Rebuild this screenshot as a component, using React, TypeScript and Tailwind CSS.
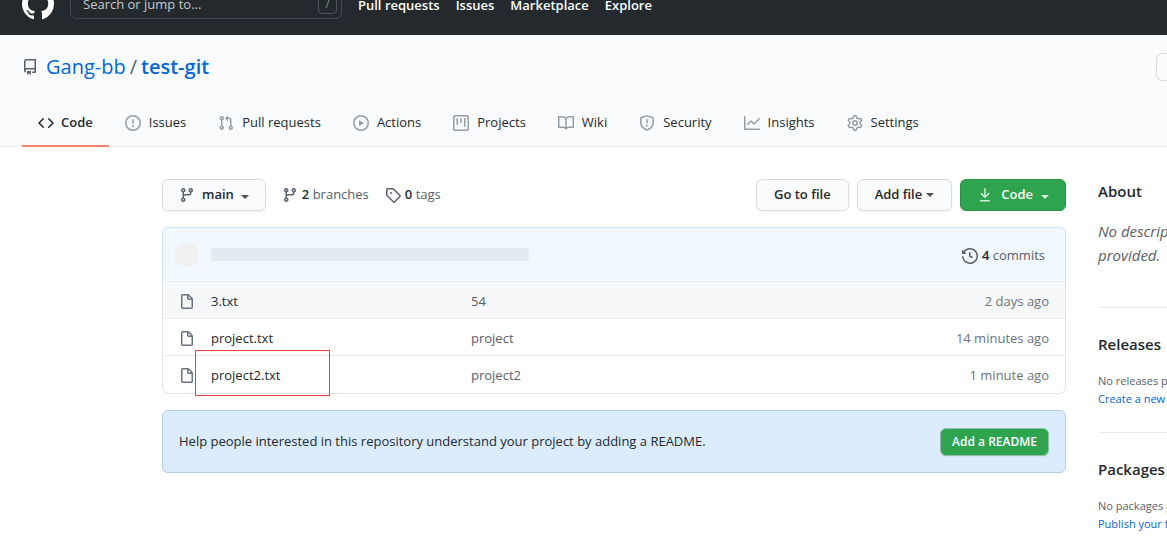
import clsx from 'clsx'
import React, { FC, ReactNode } from 'react'

const icons = {
  mark: 'M8 0C3.58 0 0 3.58 0 8c0 3.54 2.29 6.53 5.47 7.59.4.07.55-.17.55-.38 0-.19-.01-.82-.01-1.49-2.01.37-2.53-.49-2.69-.94-.09-.23-.48-.94-.82-1.13-.28-.15-.68-.52-.01-.53.63-.01 1.08.58 1.23.82.72 1.21 1.87.87 2.33.66.07-.52.28-.87.51-1.07-1.78-.2-3.64-.89-3.64-3.95 0-.87.31-1.59.82-2.15-.08-.2-.36-1.02.08-2.12 0 0 .67-.21 2.2.82.64-.18 1.32-.27 2-.27.68 0 1.36.09 2 .27 1.53-1.04 2.2-.82 2.2-.82.44 1.1.16 1.92.08 2.12.51.56.82 1.27.82 2.15 0 3.07-1.87 3.75-3.65 3.95.29.25.54.73.54 1.48 0 1.07-.01 1.93-.01 2.2 0 .21.15.46.55.38A8.013 8.013 0 0016 8c0-4.42-3.58-8-8-8z',
  repo: 'M2 2.5A2.5 2.5 0 014.5 0h8.75a.75.75 0 01.75.75v12.5a.75.75 0 01-.75.75h-2.5a.75.75 0 110-1.5h1.75v-2h-8a1 1 0 00-.714 1.7.75.75 0 01-1.072 1.05A2.495 2.495 0 012 11.5v-9zm10.5-1V9h-8c-.356 0-.694.074-1 .208V2.5a1 1 0 011-1h8zM5 12.25v3.25a.25.25 0 00.4.2l1.45-1.087a.25.25 0 01.3 0L8.6 15.7a.25.25 0 00.4-.2v-3.25a.25.25 0 00-.25-.25h-3.5a.25.25 0 00-.25.25z',
  code: 'M4.72 3.22a.75.75 0 011.06 1.06L2.06 8l3.72 3.72a.75.75 0 11-1.06 1.06L.47 8.53a.75.75 0 010-1.06l4.25-4.25zm6.56 0a.75.75 0 10-1.06 1.06L13.94 8l-3.72 3.72a.75.75 0 101.06 1.06l4.25-4.25a.75.75 0 000-1.06l-4.25-4.25z',
  issue: 'M8 1.5a6.5 6.5 0 100 13 6.5 6.5 0 000-13zM0 8a8 8 0 1116 0A8 8 0 010 8zm9 3a1 1 0 11-2 0 1 1 0 012 0zm-.25-6.25a.75.75 0 00-1.5 0v3.5a.75.75 0 001.5 0v-3.5z',
  pull: 'M7.177 3.073L9.573.677A.25.25 0 0110 .854v4.792a.25.25 0 01-.427.177L7.177 3.427a.25.25 0 010-.354zM3.75 2.5a.75.75 0 100 1.5.75.75 0 000-1.5zm-2.25.75a2.25 2.25 0 113 2.122v5.256a2.251 2.251 0 11-1.5 0V5.372A2.25 2.25 0 011.5 3.25zM11 2.5h-1V4h1a1 1 0 011 1v5.628a2.251 2.251 0 101.5 0V5A2.5 2.5 0 0011 2.5zm1 10.25a.75.75 0 111.5 0 .75.75 0 01-1.5 0zM3.75 12a.75.75 0 100 1.5.75.75 0 000-1.5z',
  play: 'M1.5 8a6.5 6.5 0 1113 0 6.5 6.5 0 01-13 0zM8 0a8 8 0 100 16A8 8 0 008 0zM6.379 5.227A.25.25 0 006 5.442v5.117a.25.25 0 00.379.214l4.264-2.559a.25.25 0 000-.428L6.379 5.227z',
  project:
    'M1.75 0A1.75 1.75 0 000 1.75v12.5C0 15.216.784 16 1.75 16h12.5A1.75 1.75 0 0016 14.25V1.75A1.75 1.75 0 0014.25 0H1.75zM1.5 1.75a.25.25 0 01.25-.25h12.5a.25.25 0 01.25.25v12.5a.25.25 0 01-.25.25H1.75a.25.25 0 01-.25-.25V1.75zM11.75 3a.75.75 0 00-.75.75v7.5a.75.75 0 001.5 0v-7.5a.75.75 0 00-.75-.75zm-8.25.75a.75.75 0 011.5 0v5.5a.75.75 0 01-1.5 0v-5.5zM8 3a.75.75 0 00-.75.75v3.5a.75.75 0 001.5 0v-3.5A.75.75 0 008 3z',
  book: 'M0 1.75A.75.75 0 01.75 1h4.253c1.227 0 2.317.59 3 1.501A3.744 3.744 0 0111.006 1h4.245a.75.75 0 01.75.75v10.5a.75.75 0 01-.75.75h-4.507a2.25 2.25 0 00-1.591.659l-.622.621a.75.75 0 01-1.06 0l-.622-.621A2.25 2.25 0 005.258 13H.75a.75.75 0 01-.75-.75V1.75zm8.755 3a2.25 2.25 0 012.25-2.25H14.5v9h-3.757c-.71 0-1.4.201-1.992.572l.004-7.322zm-1.504 7.324l.004-5.073-.002-2.253A2.25 2.25 0 005.003 2.5H1.5v9h3.757a3.75 3.75 0 011.994.574z',
  shield:
    'M7.467.133a1.75 1.75 0 011.066 0l5.25 1.68A1.75 1.75 0 0115 3.48V7c0 1.566-.32 3.182-1.303 4.682-.983 1.498-2.585 2.813-5.032 3.855a1.7 1.7 0 01-1.33 0c-2.447-1.042-4.049-2.357-5.032-3.855C1.32 10.182 1 8.566 1 7V3.48a1.75 1.75 0 011.217-1.667l5.25-1.68zm.61 1.429a.25.25 0 00-.153 0l-5.25 1.68a.25.25 0 00-.174.238V7c0 1.358.275 2.666 1.057 3.86.784 1.194 2.121 2.34 4.366 3.297a.2.2 0 00.154 0c2.245-.956 3.582-2.104 4.366-3.298C13.225 9.666 13.5 8.36 13.5 7V3.48a.25.25 0 00-.174-.237l-5.25-1.68zM9 10.5a1 1 0 11-2 0 1 1 0 012 0zm-.25-5.75a.75.75 0 10-1.5 0v3a.75.75 0 001.5 0v-3z',
  graph:
    'M1.5 1.75a.75.75 0 00-1.5 0v12.5c0 .414.336.75.75.75h14.5a.75.75 0 000-1.5H1.5V1.75zm14.28 2.53a.75.75 0 00-1.06-1.06L10 7.94 7.53 5.47a.75.75 0 00-1.06 0L3.22 8.72a.75.75 0 001.06 1.06L7 7.06l2.47 2.47a.75.75 0 001.06 0l5.25-5.25z',
  gear: 'M8 0a8.2 8.2 0 0 1 .701.031C9.444.095 9.99.645 10.16 1.29l.288 1.107c.018.066.079.158.212.224.231.114.454.243.668.386.123.082.233.09.299.071l1.103-.303c.644-.176 1.392.021 1.82.63.27.385.506.792.704 1.218.315.675.111 1.422-.364 1.891l-.814.806c-.049.048-.098.147-.088.294.016.257.016.515 0 .772-.01.147.038.246.088.294l.814.806c.475.469.679 1.216.364 1.891a7.977 7.977 0 0 1-.704 1.217c-.428.61-1.176.807-1.82.63l-1.102-.302c-.067-.019-.177-.011-.3.071a5.909 5.909 0 0 1-.668.386c-.133.066-.194.158-.211.224l-.29 1.106c-.168.646-.715 1.196-1.458 1.26a8.006 8.006 0 0 1-1.402 0c-.743-.064-1.289-.614-1.458-1.26l-.289-1.106c-.018-.066-.079-.158-.212-.224a5.738 5.738 0 0 1-.668-.386c-.123-.082-.233-.09-.299-.071l-1.103.303c-.644.176-1.392-.021-1.82-.63a8.12 8.12 0 0 1-.704-1.218c-.315-.675-.111-1.422.363-1.891l.815-.806c.05-.048.098-.147.088-.294a6.214 6.214 0 0 1 0-.772c.01-.147-.038-.246-.088-.294l-.815-.806C.635 6.045.431 5.298.746 4.623a7.92 7.92 0 0 1 .704-1.217c.428-.61 1.176-.807 1.82-.63l1.102.302c.067.019.177.011.3-.071.214-.143.437-.272.668-.386.133-.066.194-.158.211-.224l.29-1.106C6.009.645 6.556.095 7.299.03 7.53.01 7.764 0 8 0Zm-.571 1.525c-.036.003-.108.036-.137.146l-.289 1.105c-.147.561-.549.967-.998 1.189-.173.086-.34.183-.5.29-.417.278-.97.423-1.529.27l-1.103-.303c-.109-.03-.175.016-.195.045-.22.312-.412.644-.573.99-.014.031-.021.11.059.19l.815.806c.411.406.562.957.53 1.456a4.709 4.709 0 0 0 0 .582c.032.499-.119 1.05-.53 1.456l-.815.806c-.081.08-.073.159-.059.19.162.346.353.677.573.989.02.03.085.076.195.046l1.102-.303c.56-.153 1.113-.008 1.53.27.161.107.328.204.501.29.447.222.85.629.997 1.189l.289 1.105c.029.109.101.143.137.146a6.6 6.6 0 0 0 1.142 0c.036-.003.108-.036.137-.146l.289-1.105c.147-.561.549-.967.998-1.189.173-.086.34-.183.5-.29.417-.278.97-.423 1.529-.27l1.103.303c.109.029.175-.016.195-.045.22-.313.411-.644.573-.99.014-.031.021-.11-.059-.19l-.815-.806c-.411-.406-.562-.957-.53-1.456a4.709 4.709 0 0 0 0-.582c-.032-.499.119-1.05.53-1.456l.815-.806c.081-.08.073-.159.059-.19a6.464 6.464 0 0 0-.573-.989c-.02-.03-.085-.076-.195-.046l-1.102.303c-.56.153-1.113.008-1.53-.27a4.44 4.44 0 0 0-.501-.29c-.447-.222-.85-.629-.997-1.189l-.289-1.105c-.029-.11-.101-.143-.137-.146a6.6 6.6 0 0 0-1.142 0ZM11 8a3 3 0 1 1-6 0 3 3 0 0 1 6 0ZM9.5 8a1.5 1.5 0 1 0-3.001.001A1.5 1.5 0 0 0 9.5 8Z',
  branch:
    'M11.75 2.5a.75.75 0 100 1.5.75.75 0 000-1.5zm-2.25.75a2.25 2.25 0 113 2.122V6A2.5 2.5 0 0110 8.5H6a1 1 0 00-1 1v1.128a2.251 2.251 0 11-1.5 0V5.372a2.25 2.25 0 111.5 0v1.836A2.492 2.492 0 016 7h4a1 1 0 001-1v-.628A2.25 2.25 0 019.5 3.25zM4.25 12a.75.75 0 100 1.5.75.75 0 000-1.5zM3.5 3.25a.75.75 0 111.5 0 .75.75 0 01-1.5 0z',
  tag: 'M2.5 7.775V2.75a.25.25 0 01.25-.25h5.025a.25.25 0 01.177.073l6.25 6.25a.25.25 0 010 .354l-5.025 5.025a.25.25 0 01-.354 0l-6.25-6.25a.25.25 0 01-.073-.177zm-1.5 0V2.75C1 1.784 1.784 1 2.75 1h5.025c.464 0 .91.184 1.238.513l6.25 6.25a1.75 1.75 0 010 2.474l-5.026 5.026a1.75 1.75 0 01-2.474 0l-6.25-6.25A1.75 1.75 0 011 7.775zM6 5a1 1 0 100 2 1 1 0 000-2z',
  download:
    'M7.47 10.78a.75.75 0 001.06 0l3.75-3.75a.75.75 0 00-1.06-1.06L8.75 8.44V1.75a.75.75 0 00-1.5 0v6.69L4.78 5.97a.75.75 0 00-1.06 1.06l3.75 3.75zM3.75 13a.75.75 0 000 1.5h8.5a.75.75 0 000-1.5h-8.5z',
  history:
    'M1.643 3.143L.427 1.927A.25.25 0 000 2.104V5.75c0 .138.112.25.25.25h3.646a.25.25 0 00.177-.427L2.715 4.215a6.5 6.5 0 11-1.18 4.458.75.75 0 10-1.493.154 8.001 8.001 0 101.6-5.684zM7.75 4a.75.75 0 01.75.75v2.992l2.028.812a.75.75 0 01-.557 1.392l-2.5-1A.75.75 0 017 8.25v-3.5A.75.75 0 017.75 4z',
  file: 'M3.75 1.5a.25.25 0 00-.25.25v11.5c0 .138.112.25.25.25h8.5a.25.25 0 00.25-.25V6H9.75A1.75 1.75 0 018 4.25V1.5H3.75zm5.75.56v2.19c0 .138.112.25.25.25h2.19L9.5 2.06zM2 1.75C2 .784 2.784 0 3.75 0h5.086c.464 0 .909.184 1.237.513l3.414 3.414c.329.328.513.773.513 1.237v8.086A1.75 1.75 0 0112.25 15h-8.5A1.75 1.75 0 012 13.25V1.75z',
}

type IconName = keyof typeof icons

const Icon: FC<{ name: IconName; className?: string }> = ({ name, className }) => (
  <svg viewBox="0 0 16 16" fill="currentColor" aria-hidden="true" className={clsx('shrink-0', className ?? 'size-4')}>
    <path fillRule="evenodd" d={icons[name]} />
  </svg>
)

const Caret: FC<{ className?: string }> = ({ className }) => (
  <span
    className={clsx('inline-block border-x-4 border-t-4 border-x-transparent border-t-current opacity-80', className)}
  />
)

const tabs: { label: string; icon: IconName }[] = [
  { label: 'Code', icon: 'code' },
  { label: 'Issues', icon: 'issue' },
  { label: 'Pull requests', icon: 'pull' },
  { label: 'Actions', icon: 'play' },
  { label: 'Projects', icon: 'project' },
  { label: 'Wiki', icon: 'book' },
  { label: 'Security', icon: 'shield' },
  { label: 'Insights', icon: 'graph' },
  { label: 'Settings', icon: 'gear' },
]

const files = [
  { name: '3.txt', message: '54', age: '2 days ago' },
  { name: 'project.txt', message: 'project', age: '14 minutes ago' },
  { name: 'project2.txt', message: 'project2', age: '1 minute ago', marked: true },
]

const Header: FC = () => (
  <header className="flex h-[35px] items-end overflow-hidden bg-[#24292e]">
    <div className="flex h-[62px] w-full shrink-0 items-center gap-4 px-[22px] text-white">
      <a href="#" aria-label="Homepage">
        <Icon name="mark" className="size-8" />
      </a>
      <label className="flex h-[30px] w-[272px] items-center rounded-md border border-[#444d56] pr-1 pl-3">
        <input
          type="text"
          aria-label="Search"
          placeholder="Search or jump to..."
          className="min-w-0 flex-1 bg-transparent pt-[2px] text-[13px] outline-none placeholder:text-[#c6c8ca]"
        />
        <kbd className="flex h-5 w-[19px] items-center justify-center rounded border border-[#4c545c] font-[inherit] text-[11px] text-[#8a9097]">
          /
        </kbd>
      </label>
      <nav className="flex gap-4 pt-[3px] text-[13px] font-semibold">
        <a href="#">Pull requests</a>
        <a href="#">Issues</a>
        <a href="#">Marketplace</a>
        <a href="#">Explore</a>
      </nav>
    </div>
  </header>
)

const RepoHead: FC = () => (
  <div className="border-b border-[#eaecef] bg-[#fafbfc] pt-[18px]">
    <div className="flex items-center justify-between pl-[22px]">
      <h1 className="flex items-center text-xl leading-7 text-[#0366d6]">
        <Icon name="repo" className="mr-2 size-4 text-[#586069]" />
        <a href="#">Gang-bb</a>
        <span className="mx-1 text-[#586069]">/</span>
        <a href="#" className="font-semibold">
          test-git
        </a>
      </h1>
      <button
        type="button"
        aria-label="Watch"
        className="h-7 w-[11px] rounded-l-md border border-r-0 border-[#d9dbdd] bg-[#fafbfc]"
      />
    </div>
    <nav className="mt-4 -mb-px flex pl-[22px]">
      {tabs.map(({ label, icon }, i) => (
        <a
          key={label}
          href="#"
          className={clsx(
            'flex h-[50px] items-center border-b-2 px-4 pt-[3px] text-[13px]',
            i === 0 ? 'gap-[7px] border-[#f9826c] font-semibold' : 'gap-2 border-transparent',
          )}
        >
          <Icon name={icon} className={clsx('size-4', i > 0 && 'text-[#959da5]')} />
          {label}
        </a>
      ))}
    </nav>
  </div>
)

const buttonClass =
  'flex h-8 items-center rounded-md border border-[#dadcde] bg-[#fafbfc] text-[13px] font-semibold shadow-xs'

const Toolbar: FC = () => (
  <div className="flex items-center">
    <button type="button" className={clsx(buttonClass, 'gap-[7px] px-4')}>
      <Icon name="branch" className="size-4 text-[#586069]" />
      main
      <Caret className="mt-[3px]" />
    </button>
    <a href="#" className="ml-4 flex items-center gap-1 text-[#586069]">
      <Icon name="branch" />
      <span>
        <strong className="font-semibold text-[#24292e]">2</strong> branches
      </span>
    </a>
    <a href="#" className="ml-4 flex items-center gap-1 text-[#586069]">
      <Icon name="tag" />
      <span>
        <strong className="font-semibold text-[#24292e]">0</strong> tags
      </span>
    </a>
    <div className="ml-auto flex gap-2">
      <button type="button" className={clsx(buttonClass, 'px-[17px]')}>
        Go to file
      </button>
      <button type="button" className={clsx(buttonClass, 'gap-1 px-[17px]')}>
        Add file
        <Caret />
      </button>
      <button
        type="button"
        className="flex h-8 items-center gap-2 rounded-md border border-[#2a9147] bg-[#2ea44f] px-4 text-[13px] font-semibold text-white"
      >
        <Icon name="download" className="size-4 opacity-80" />
        Code
        <Caret className="mt-[3px]" />
      </button>
    </div>
  </div>
)

const FileList: FC = () => (
  <div className="mt-4">
    <div className="flex h-[54px] items-center rounded-t-md border border-b-0 border-[#c8e1ff] bg-[#f1f8ff] pr-5 pl-3">
      <span className="size-6 rounded-full bg-[#f1f1f1]" />
      <span className="ml-3 h-[13px] w-[318px] rounded-xs bg-[#e3eaf2]" />
      <a href="#" className="ml-auto flex items-center gap-1 pt-[2px] text-[#586069]">
        <Icon name="history" />
        <span>
          <strong className="font-semibold text-[#24292e]">4</strong> commits
        </span>
      </a>
    </div>
    <div className="rounded-b-md border border-t-0 border-[#e1e4e8] pb-px">
      <table className="w-full table-fixed border-separate border-spacing-0">
        <tbody>
          {files.map(({ name, message, age, marked }, i) => (
            <tr key={name} className={clsx(i === 0 && 'bg-[#f6f8fa]')}>
              <td className="h-[37px] w-12 border-t border-[#eaecef] pt-[3px] pl-4 text-[#6a737d]">
                <Icon name="file" />
              </td>
              <td className="relative w-[260px] border-t border-[#eaecef] pt-[3px]">
                <a href="#">{name}</a>
                {marked && (
                  <span className="pointer-events-none absolute -top-[6px] -left-4 h-[46px] w-[135px] border border-[#f5383a]" />
                )}
              </td>
              <td className="border-t border-[#eaecef] pt-[3px] text-[#586069]">{message}</td>
              <td className="border-t border-[#eaecef] pt-[3px] pr-4 text-right text-[#6a737d]">{age}</td>
            </tr>
          ))}
        </tbody>
      </table>
    </div>
  </div>
)

const ReadmePrompt: FC = () => (
  <div className="mt-4 flex h-[63px] items-center justify-between rounded-md border border-[#b0cdea] bg-[#dbecff] px-4">
    <p>Help people interested in this repository understand your project by adding a README.</p>
    <a
      href="#"
      className="flex h-7 items-center rounded-md border border-[#8fbfae] bg-[#2ea44f] px-[11px] text-xs font-semibold text-white shadow-xs"
    >
      Add a README
    </a>
  </div>
)

const SideSection: FC<{ title: string; children: ReactNode }> = ({ title, children }) => (
  <section className="border-b border-[#eaecef] pb-6 not-first:pt-6">
    <h2 className="mb-4 text-[15px] leading-6 font-semibold">{title}</h2>
    {children}
  </section>
)

const Sidebar: FC = () => (
  <aside className="overflow-x-hidden">
    <div className="w-[280px]">
      <SideSection title="About">
        <p className="mb-4 text-[15px] leading-6 text-[#586069] italic">
          No description, website, or topics provided.
        </p>
      </SideSection>
      <SideSection title="Releases">
        <p className="text-[11px] leading-[18px] text-[#586069]">No releases published</p>
        <a href="#" className="block text-[11px] leading-[18px] text-[#0366d6]">
          Create a new release
        </a>
      </SideSection>
      <SideSection title="Packages">
        <p className="text-[11px] leading-[18px] text-[#586069]">No packages published</p>
        <a href="#" className="block text-[11px] leading-[18px] text-[#0366d6]">
          Publish your first package
        </a>
      </SideSection>
    </div>
  </aside>
)

export default function App() {
  return (
    <div className="h-screen overflow-hidden bg-white font-['Segoe_UI','Open_Sans',sans-serif] text-[13px] text-[#24292e]">
      <Header />
      <RepoHead />
      <div className="grid grid-cols-[minmax(0,1fr)_69px] gap-8 pt-8 pl-[162px]">
        <main>
          <Toolbar />
          <FileList />
          <ReadmePrompt />
        </main>
        <Sidebar />
      </div>
    </div>
  )
}
